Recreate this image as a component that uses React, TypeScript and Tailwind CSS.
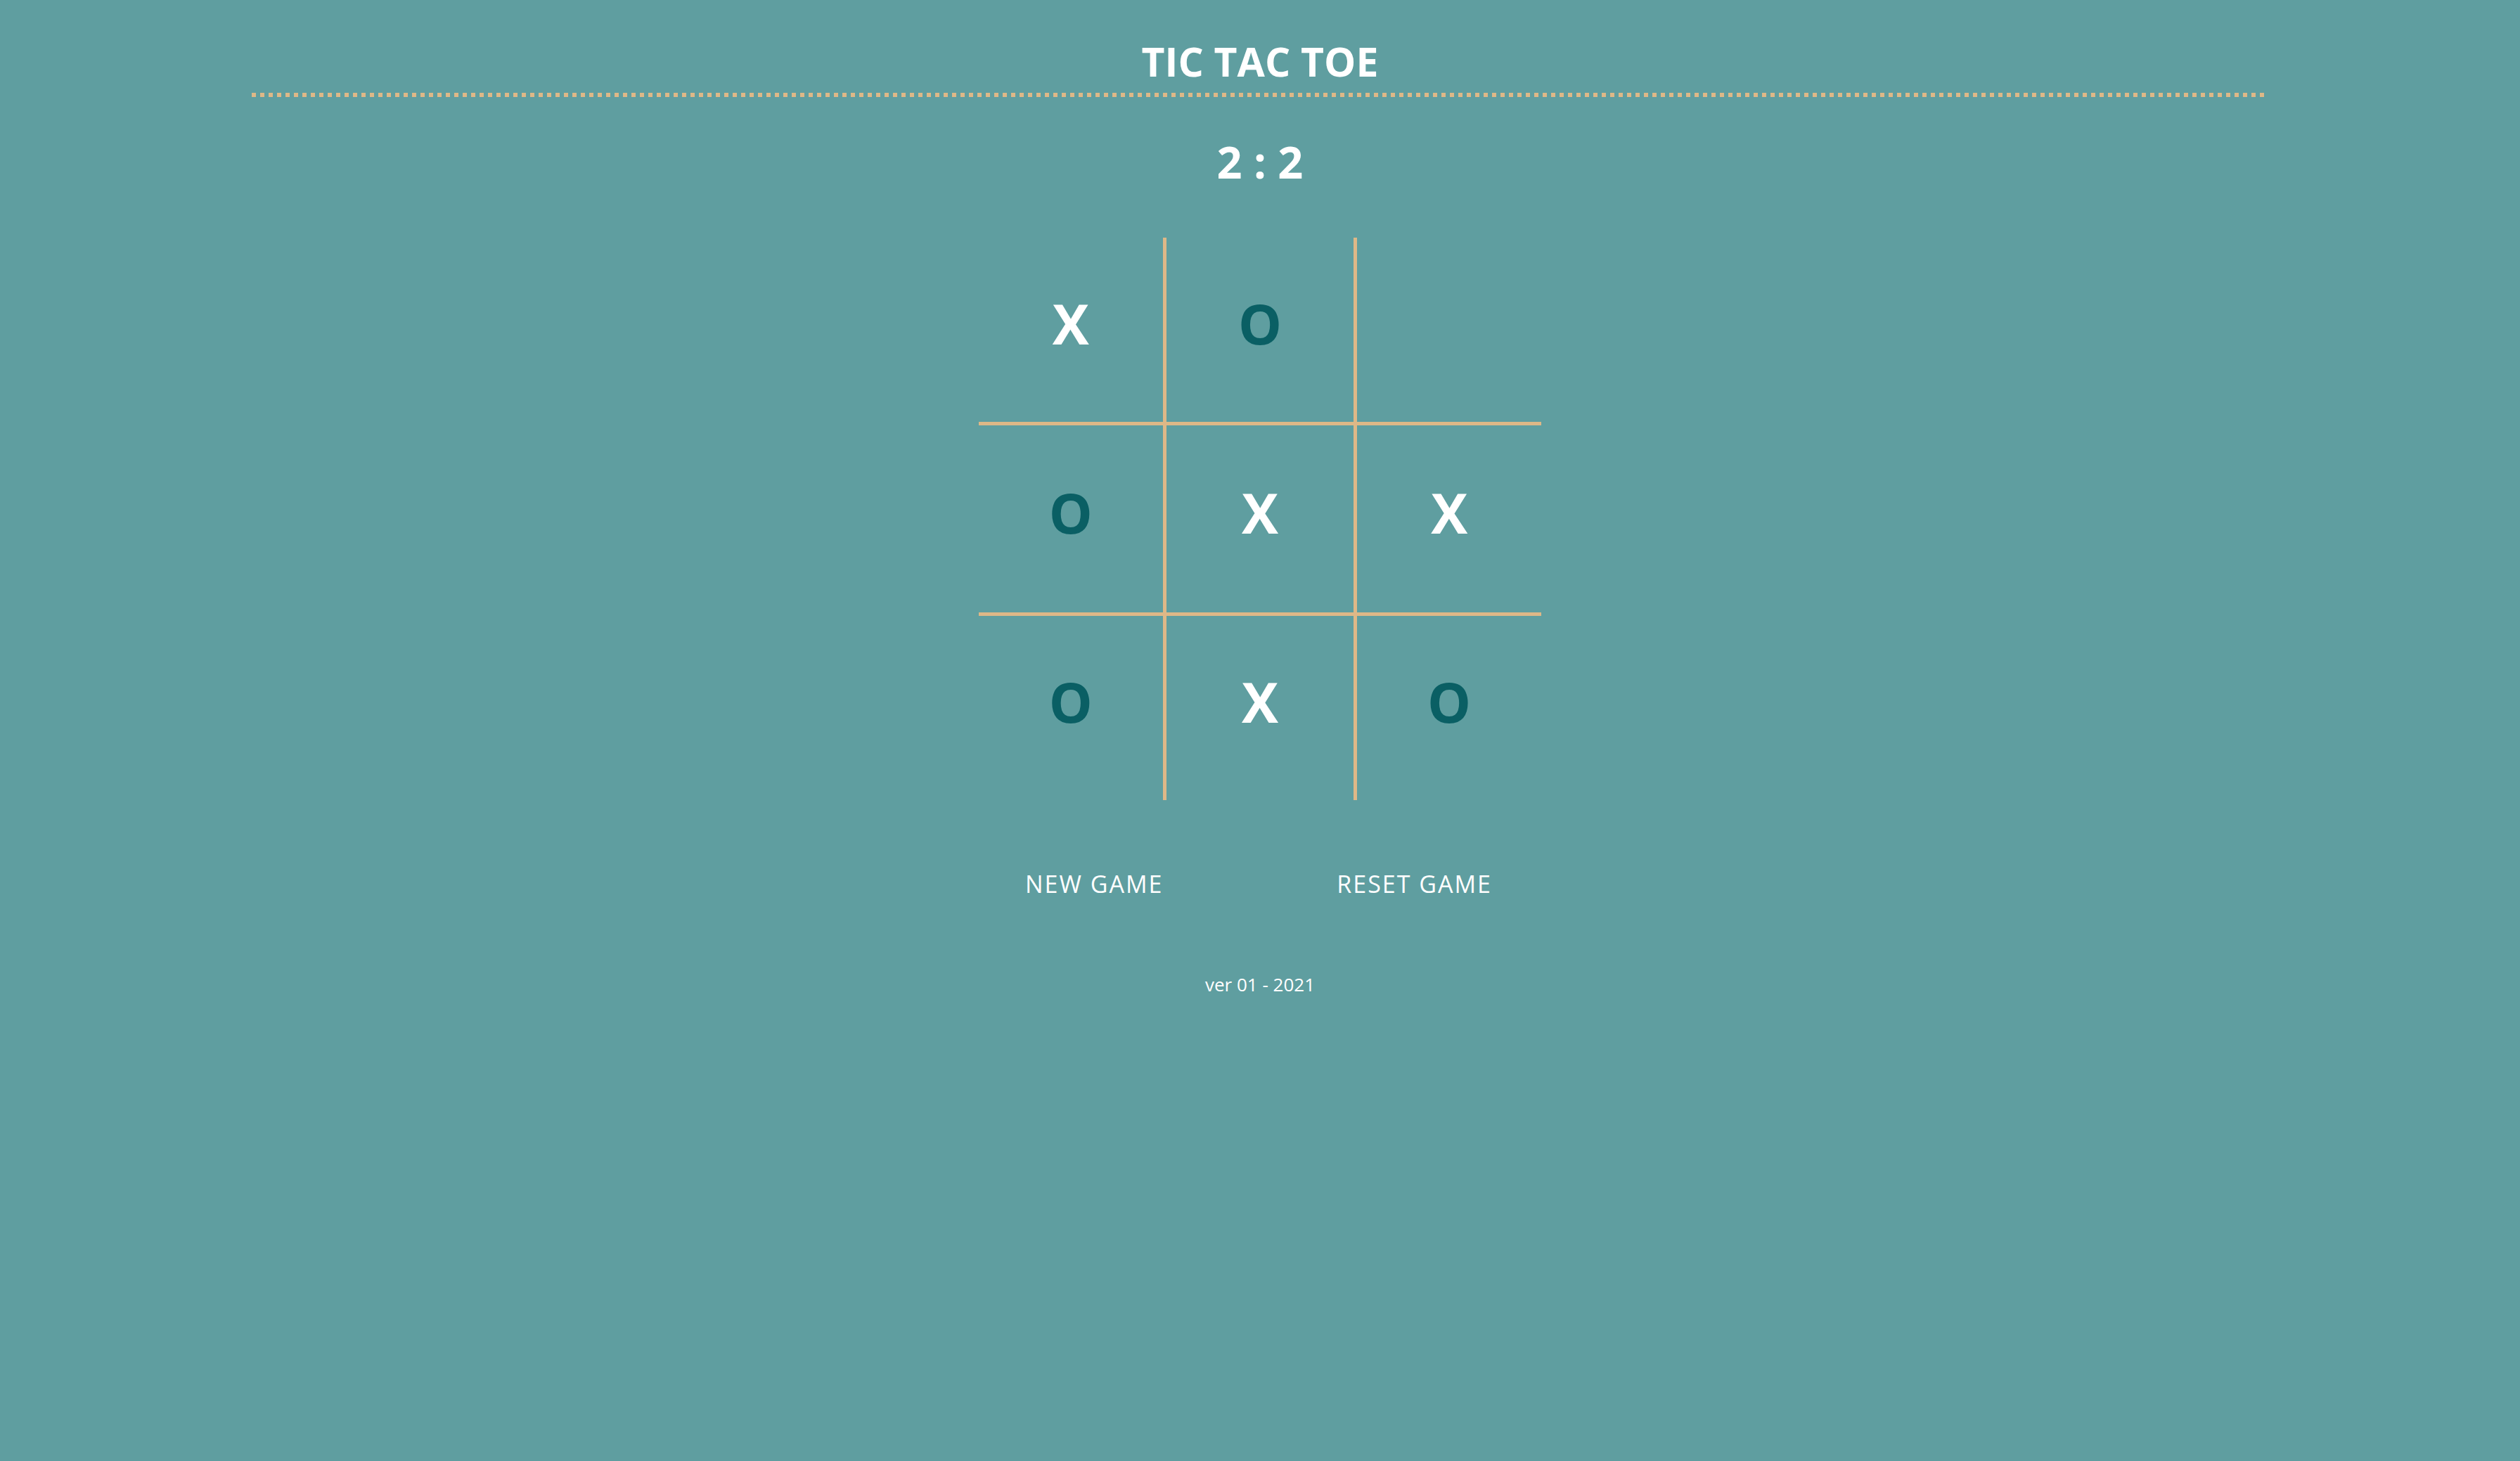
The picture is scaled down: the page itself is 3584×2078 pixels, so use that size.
import React, { useState } from 'react';

type Mark = 'X' | 'O' | '';

const cellBorders = [
    'border-r-[5px] border-b-[5px]',
    'border-b-[5px]',
    'border-l-[5px] border-b-[5px]',
    'border-r-[5px]',
    '',
    'border-l-[5px]',
    'border-r-[5px] border-t-[5px]',
    'border-t-[5px]',
    'border-l-[5px] border-t-[5px]',
];

const initialBoard: Mark[] = ['X', 'O', '', 'O', 'X', 'X', 'O', 'X', 'O'];

const App: React.FC = () => {
    const [board, setBoard] = useState<Mark[]>(initialBoard);
    const [score, setScore] = useState({ x: 2, o: 2 });

    const newGame = () => setBoard(Array(9).fill('') as Mark[]);
    const resetGame = () => {
        setBoard(Array(9).fill('') as Mark[]);
        setScore({ x: 0, o: 0 });
    };

    return (
        <div className="min-h-screen w-full bg-[#5f9ea0] font-['Open_Sans',sans-serif] text-white">
            <header className="mx-auto w-[80%] pt-[59px]">
                <h1 className="text-center text-[57px] font-bold leading-none">TIC TAC TOE</h1>
                <div className="mt-[16px] h-[6px] w-full bg-[repeating-linear-gradient(90deg,#deb887_0_6px,transparent_6px_12px)]" />
            </header>

            <div className="mt-[60px] text-center text-[63px] font-bold leading-none">
                {score.x} : {score.o}
            </div>

            <div className="mx-auto mt-[77px] grid h-[800px] w-[800px] grid-cols-3 grid-rows-3">
                {board.map((mark, i) => (
                    <div
                        key={i}
                        className={`flex items-center justify-center border-[#deb887] pb-[18px] text-[78px] font-bold leading-none ${cellBorders[i]} ${mark === 'O' ? 'text-[#0a5f64]' : 'text-white'}`}
                    >
                        {mark}
                    </div>
                ))}
            </div>

            <div className="mx-auto mt-[102px] flex w-[800px] justify-between pl-[66px] pr-[70px]">
                <button type="button" onClick={newGame} className="text-[34px] leading-none tracking-[2px]">
                    NEW GAME
                </button>
                <button type="button" onClick={resetGame} className="text-[34px] leading-none tracking-[2px]">
                    RESET GAME
                </button>
            </div>

            <p className="mt-[113px] text-center text-[26px] leading-none">ver 01 - 2021</p>
        </div>
    );
};

export default App;
